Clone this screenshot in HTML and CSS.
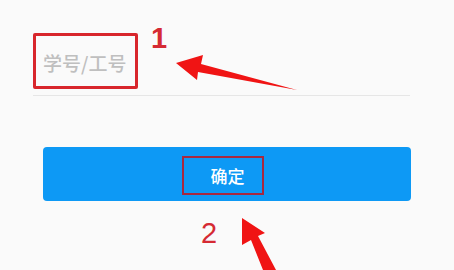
FILE: index.html
```html
<!DOCTYPE html>
<html lang="zh">
<head>
<meta charset="utf-8">
<link rel="stylesheet" href="styles.css">
</head>
<body>
<div class="page">
  <div class="form">
    <div class="field">
      <div class="field-label">学号/工号</div>
    </div>
    <div class="btn">
      <div class="btn-label">确定</div>
    </div>
  </div>
  <span class="mark mark-1">1</span>
  <span class="mark mark-2">2</span>
  <svg class="arrows" width="454" height="270" viewBox="0 0 454 270">
    <polygon fill="#f01414" points="176,63 203,55 201,64 297,90 198,72 197,80"/>
    <polygon fill="#f01414" points="242,218 265,233 258,236 276,270 263,270 251,240 242,245"/>
  </svg>
</div>
</body>
</html>
```
FILE: styles.css
```css
html, body {
  margin: 0;
  padding: 0;
}
body {
  background: #fafafa;
  font-family: "Noto Sans CJK SC", "Noto Sans", sans-serif;
}
.page {
  position: relative;
  width: 454px;
  height: 270px;
  overflow: hidden;
}
.form {
  padding: 33px 0 0 33px;
  width: 377px;
}
.field {
  border-bottom: 1px solid #e6e6e6;
  padding-bottom: 6px;
}
.field-label {
  box-sizing: border-box;
  width: 105px;
  height: 56px;
  border: 3px solid #d8262c;
  border-radius: 2px;
  display: flex;
  align-items: center;
  padding-left: 7px;
  padding-top: 2px;
  font-size: 19px;
  font-weight: 500;
  color: #bfbfbf;
  white-space: nowrap;
}
.btn {
  box-sizing: border-box;
  margin: 51px 0 0 10px;
  width: 368px;
  height: 54px;
  border-radius: 4px;
  background: #0d99f5;
  display: flex;
  align-items: center;
  justify-content: center;
}
.btn-label {
  box-sizing: border-box;
  width: 82px;
  height: 39px;
  margin: 3px 8px 0 0;
  border: 2.5px solid #a8283f;
  display: flex;
  align-items: center;
  justify-content: center;
  padding-left: 9px;
  color: #ffffff;
  font-size: 17px;
  font-weight: 500;
}
.mark {
  position: absolute;
  font-family: "Liberation Sans", Arial, sans-serif;
  font-size: 29px;
  line-height: 1;
  color: #d52a33;
}
.mark-1 {
  left: 151px;
  top: 24px;
  font-weight: bold;
}
.mark-2 {
  left: 201px;
  top: 219px;
}
.arrows {
  position: absolute;
  left: 0;
  top: 0;
}
```
